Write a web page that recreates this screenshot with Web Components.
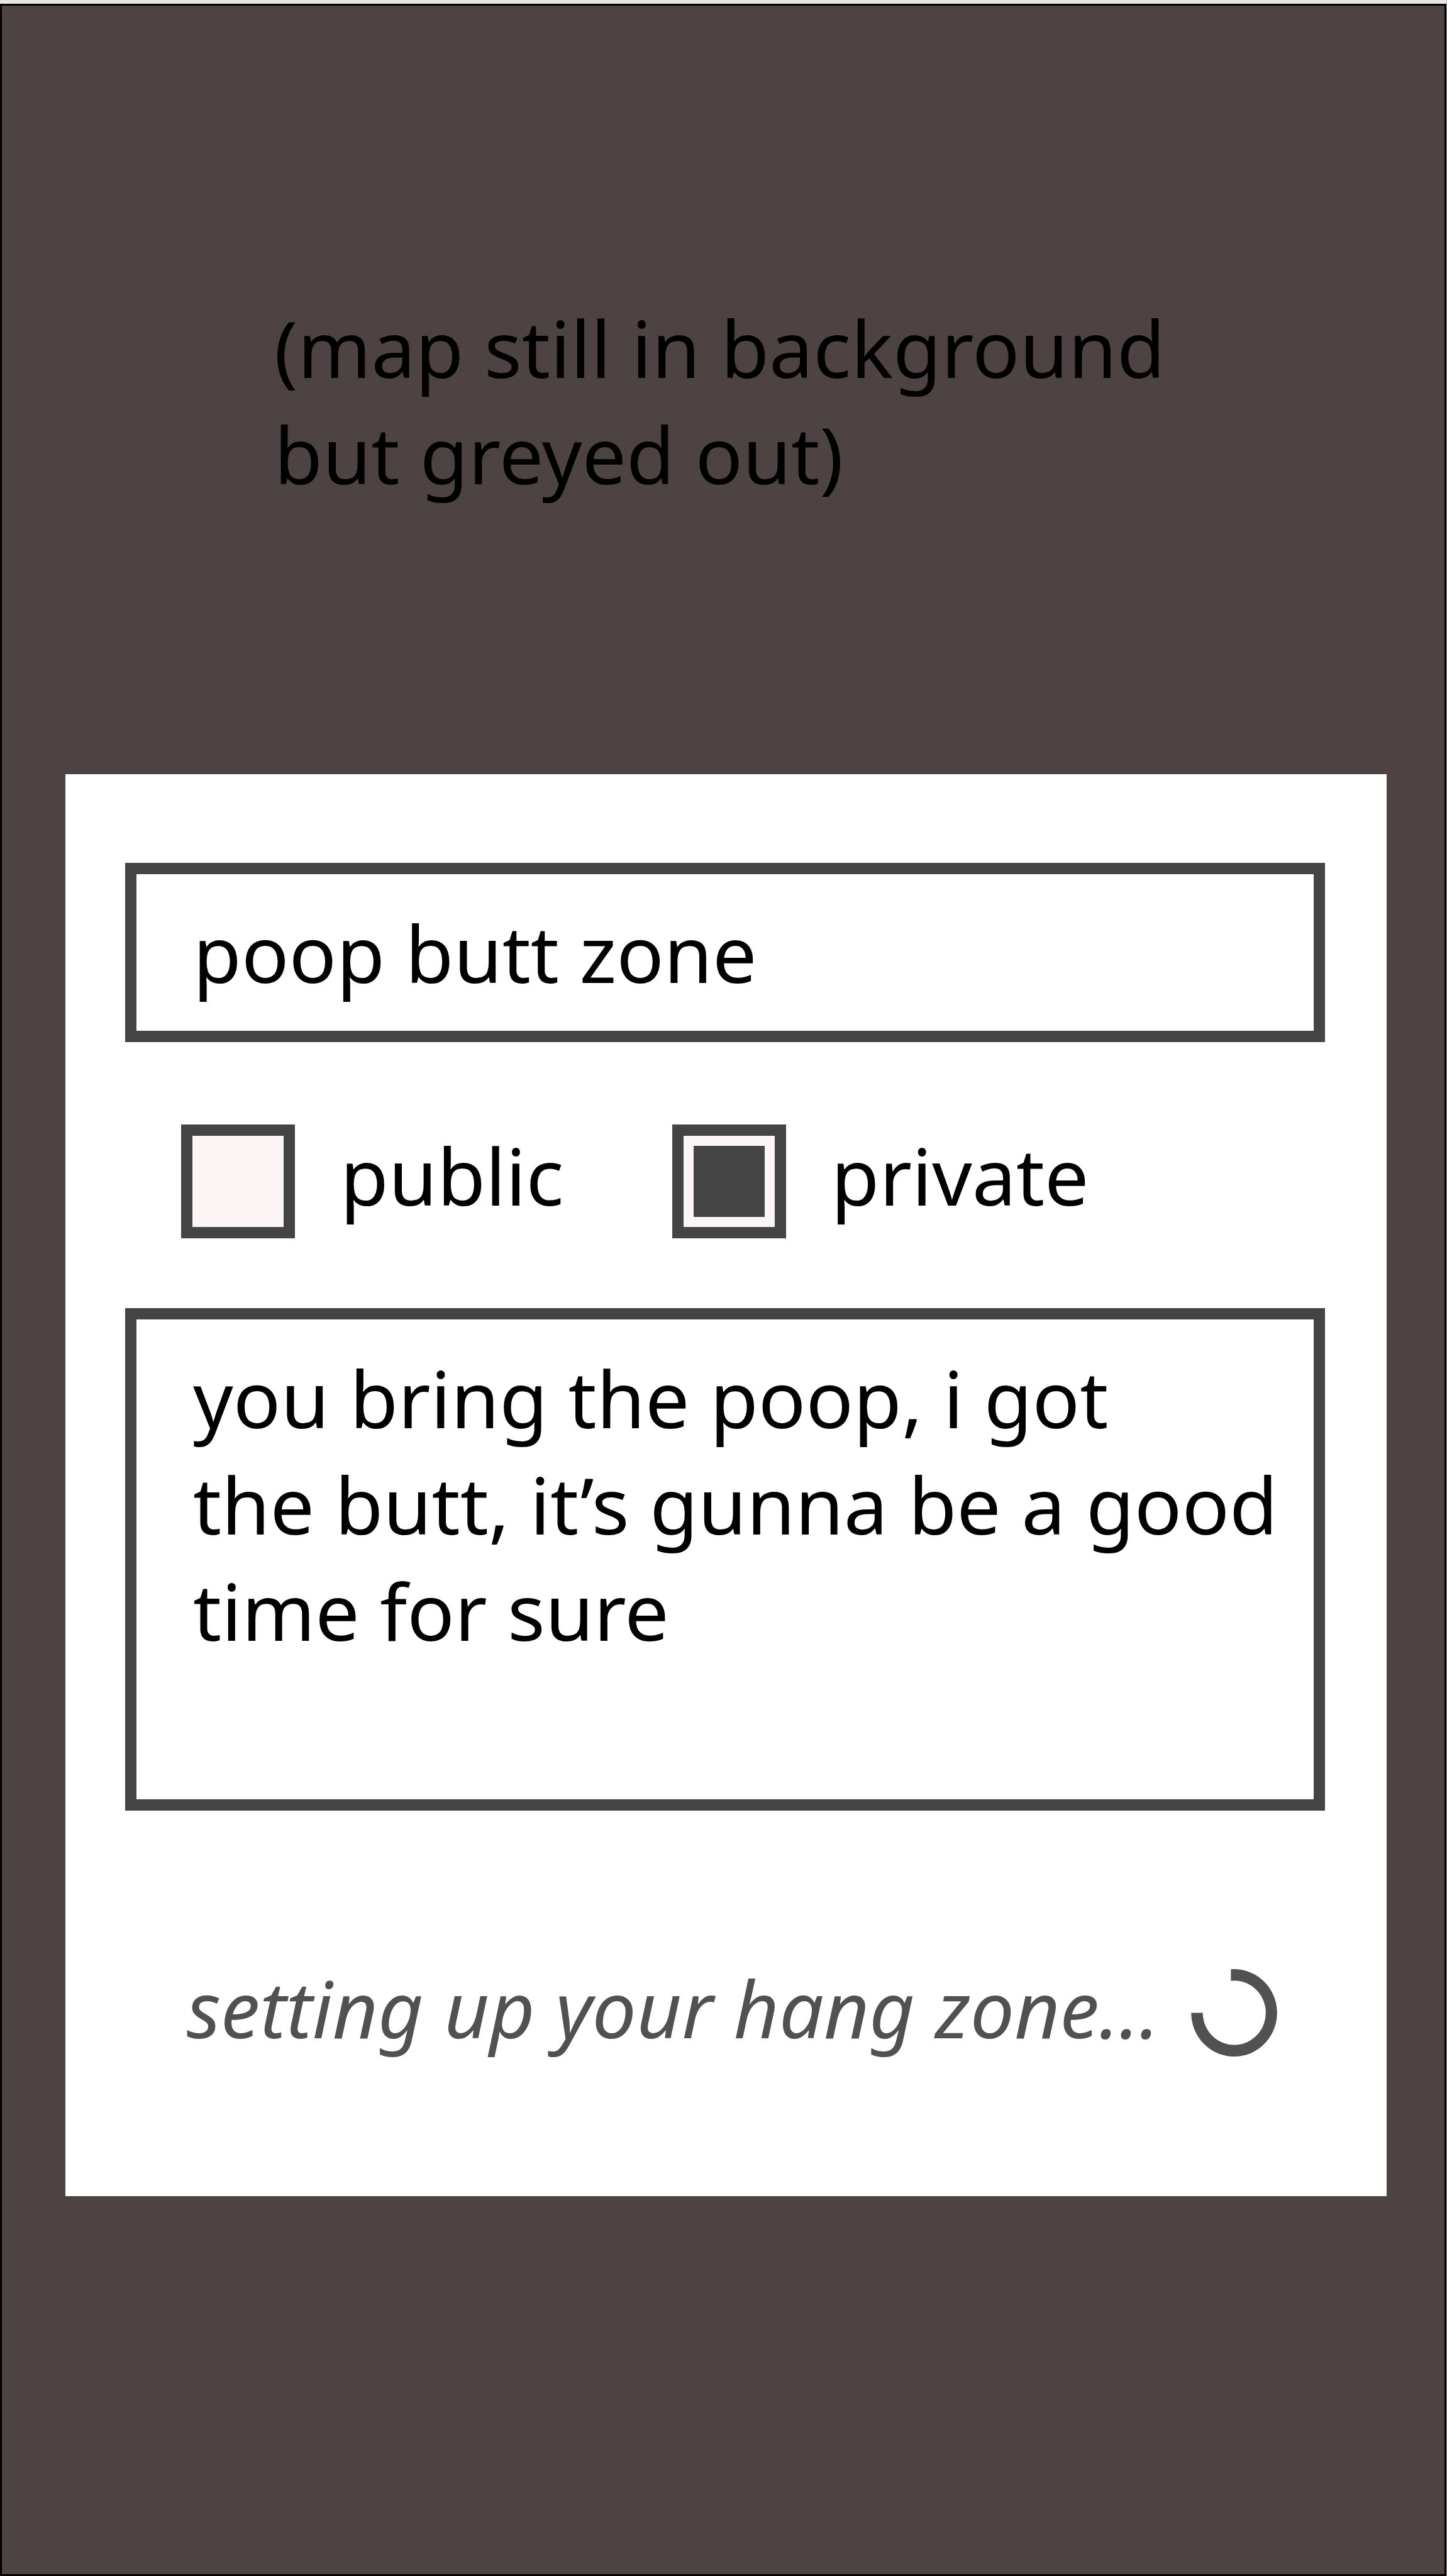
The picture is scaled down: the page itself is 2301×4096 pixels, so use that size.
<!DOCTYPE html>
<html lang="en">
<head>
<meta charset="utf-8">
<title>New hang zone</title>
<style>
  body {
    margin: 0;
    background: #e6e6e6;
    font: 125px/169px "Noto Sans", "Open Sans", sans-serif;
    color: #000;
  }
</style>
</head>
<body>

<map-screen>
  <map-note slot="note">(map still in background<br>but greyed out)</map-note>
  <zone-card>
    <zone-name label="Zone name" value="poop butt zone"></zone-name>
    <zone-visibility></zone-visibility>
    <zone-details label="Details">you bring the poop, i got
the butt, it’s gunna be a good
time for sure</zone-details>
    <zone-status>setting up your hang zone...</zone-status>
  </zone-card>
</map-screen>

<script>
  const attach = (host, html) => {
    const template = document.createElement('template');
    template.innerHTML = '<style>*, *::before { box-sizing: border-box; }</style>' + html;
    const root = host.attachShadow({ mode: 'open' });
    root.append(template.content.cloneNode(true));
    return root;
  };

  // Dimmed map behind the dialog
  customElements.define('map-screen', class extends HTMLElement {
    constructor() {
      super();
      attach(this, `
        <style>
          :host { display: block; padding-top: 6px; border-right: 1px solid #b5b5b5; }
          main {
            display: flex;
            flex-direction: column;
            gap: 425px;
            box-sizing: border-box;
            min-height: calc(100vh - 6px);
            padding: 459px 92px 120px 101px;
            border: 3px solid #000;
            background: #4d4343;
          }
        </style>
        <main><slot name="note"></slot><slot></slot></main>`);
    }
  });

  customElements.define('map-note', class extends HTMLElement {
    constructor() {
      super();
      attach(this, `
        <style>
          :host { display: block; padding-left: 332px; }
          p { margin: 0; }
        </style>
        <p><slot></slot></p>`);
    }
  });

  customElements.define('zone-card', class extends HTMLElement {
    constructor() {
      super();
      attach(this, `
        <style>
          :host { display: block; background: #fff; }
          form { display: flex; flex-direction: column; padding: 141px 98px 215px 95px; }
        </style>
        <form><slot></slot></form>`);
    }
  });

  customElements.define('zone-name', class extends HTMLElement {
    constructor() {
      super();
      const root = attach(this, `
        <style>
          :host { display: block; }
          input {
            display: block;
            width: 100%;
            margin: 0;
            padding: 40px 90px;
            border: 18px solid #444;
            border-radius: 0;
            background: #fff;
            font: inherit;
            color: inherit;
            height: 285px;
            outline: 0;
          }
        </style>
        <input type="text">`);
      const input = root.querySelector('input');
      input.value = this.getAttribute('value');
      input.setAttribute('aria-label', this.getAttribute('label'));
    }
  });

  customElements.define('zone-visibility', class extends HTMLElement {
    constructor() {
      super();
      attach(this, `
        <style>
          :host { display: block; padding: 131px 89px 111px; }
          div { display: flex; gap: 172px; }
          label { display: flex; align-items: flex-start; gap: 72px; line-height: 161px; }
          input {
            appearance: none;
            display: grid;
            flex: none;
            width: 181px;
            height: 181px;
            margin: 0;
            padding: 16px;
            border: 18px solid #444;
            background: #fcf5f5;
          }
          input:checked::before { content: ""; background: #444; }
        </style>
        <div role="radiogroup" aria-label="Visibility">
          <label for="public"><input type="radio" id="public" name="visibility"><span>public</span></label>
          <label for="private"><input type="radio" id="private" name="visibility" checked><span>private</span></label>
        </div>`);
    }
  });

  customElements.define('zone-details', class extends HTMLElement {
    constructor() {
      super();
      const root = attach(this, `
        <style>
          :host { display: block; }
          textarea {
            display: block;
            width: 100%;
            height: 799px;
            margin: 0;
            padding: 40px 40px 40px 90px;
            border: 18px solid #444;
            border-radius: 0;
            background: #fff;
            font: inherit;
            color: inherit;
            resize: none;
            overflow: hidden;
            outline: 0;
          }
        </style>
        <textarea></textarea>`);
      const area = root.querySelector('textarea');
      area.value = this.textContent;
      area.setAttribute('aria-label', this.getAttribute('label'));
    }
  });

  customElements.define('zone-status', class extends HTMLElement {
    constructor() {
      super();
      attach(this, `
        <style>
          :host { display: block; padding: 229px 76px 0 98px; color: #515151; font-style: italic; }
          div { display: flex; align-items: center; justify-content: space-between; }
          svg { flex: none; width: 137px; height: 155px; padding-top: 16px; fill: currentColor; }
        </style>
        <div role="status">
          <span><slot></slot></span>
          <svg viewBox="111 120 556 566" aria-hidden="true">
            <path d="M368 121A278 283 0 1 1 111 403H186A204 208 0 1 0 368 196Z"/>
          </svg>
        </div>`);
    }
  });
</script>
</body>
</html>
